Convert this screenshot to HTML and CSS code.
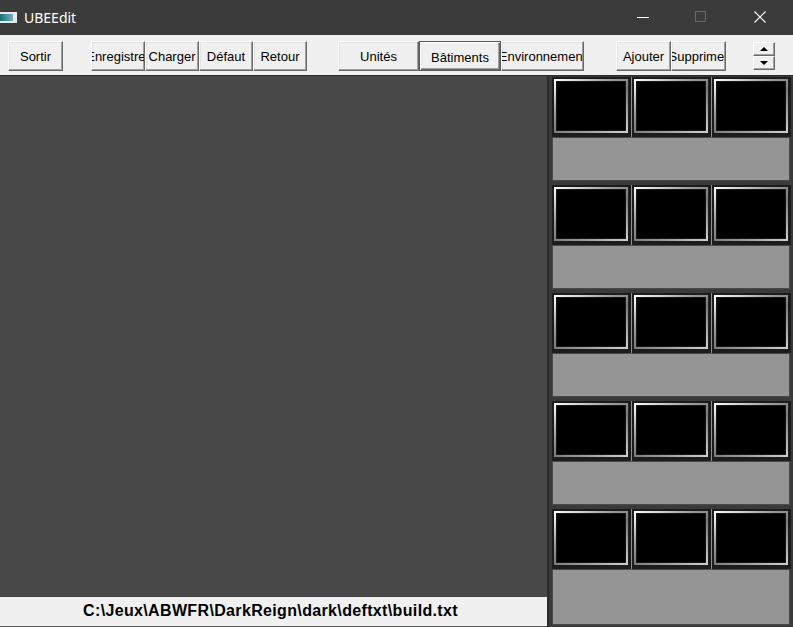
FILE: index.html
```html
<!DOCTYPE html>
<html lang="fr">
<head>
<meta charset="utf-8">
<title>UBEEdit</title>
<link rel="stylesheet" href="styles.css">
</head>
<body>
<div class="window">
  <header class="titlebar">
    <span class="app-icon"><span class="app-icon-inner"></span></span>
    <span class="title">UBEEdit</span>
    <div class="caption-buttons">
      <span class="cap cap-min"><svg width="12" height="12" viewBox="0 0 12 12"><line x1="0" y1="6.5" x2="12" y2="6.5" stroke="#ffffff" stroke-width="1"/></svg></span>
      <span class="cap cap-max"><svg width="12" height="12" viewBox="0 0 12 12"><rect x="0.5" y="0.5" width="10" height="10" fill="none" stroke="#6a6a6a" stroke-width="1"/></svg></span>
      <span class="cap cap-close"><svg width="12" height="12" viewBox="0 0 12 12"><path d="M0.5 0.5 L11.5 11.5 M11.5 0.5 L0.5 11.5" stroke="#ffffff" stroke-width="1.1"/></svg></span>
    </div>
  </header>

  <nav class="toolbar">
    <button class="btn w55">Sortir</button>
    <div class="group g-file">
      <button class="btn w54">Enregistrer</button>
      <button class="btn w54">Charger</button>
      <button class="btn w54">Défaut</button>
      <button class="btn w54">Retour</button>
    </div>
    <div class="group g-kind">
      <button class="btn w81">Unités</button>
      <button class="btn w82 active">Bâtiments</button>
      <button class="btn w83">Environnement</button>
    </div>
    <div class="group g-edit">
      <button class="btn w55">Ajouter</button>
      <button class="btn w55">Supprimer</button>
    </div>
    <div class="spin">
      <span class="spin-half"><span class="tri-up"></span></span>
      <span class="spin-half"><span class="tri-down"></span></span>
    </div>
  </nav>

  <main class="workspace">
    <section class="editor">
      <div class="canvas"></div>
      <div class="statusbar">C:\Jeux\ABWFR\DarkReign\dark\deftxt\build.txt</div>
    </section>

    <aside class="palette">
      <div class="block">
        <div class="tiles">
          <div class="tile"><div class="frame"><div class="screen"></div></div></div>
          <div class="tile"><div class="frame"><div class="screen"></div></div></div>
          <div class="tile"><div class="frame"><div class="screen"></div></div></div>
        </div>
        <div class="info"></div>
      </div>
      <div class="block">
        <div class="tiles">
          <div class="tile"><div class="frame"><div class="screen"></div></div></div>
          <div class="tile"><div class="frame"><div class="screen"></div></div></div>
          <div class="tile"><div class="frame"><div class="screen"></div></div></div>
        </div>
        <div class="info"></div>
      </div>
      <div class="block">
        <div class="tiles">
          <div class="tile"><div class="frame"><div class="screen"></div></div></div>
          <div class="tile"><div class="frame"><div class="screen"></div></div></div>
          <div class="tile"><div class="frame"><div class="screen"></div></div></div>
        </div>
        <div class="info"></div>
      </div>
      <div class="block">
        <div class="tiles">
          <div class="tile"><div class="frame"><div class="screen"></div></div></div>
          <div class="tile"><div class="frame"><div class="screen"></div></div></div>
          <div class="tile"><div class="frame"><div class="screen"></div></div></div>
        </div>
        <div class="info"></div>
      </div>
      <div class="block last">
        <div class="tiles">
          <div class="tile"><div class="frame"><div class="screen"></div></div></div>
          <div class="tile"><div class="frame"><div class="screen"></div></div></div>
          <div class="tile"><div class="frame"><div class="screen"></div></div></div>
        </div>
        <div class="info"></div>
      </div>
    </aside>
  </main>
</div>
</body>
</html>
```

FILE: styles.css
```css
* { box-sizing: border-box; }

html, body {
  margin: 0;
  padding: 0;
  width: 793px;
  height: 627px;
  overflow: hidden;
  background: #3a3a3a;
}

.window {
  width: 793px;
  height: 627px;
  display: flex;
  flex-direction: column;
}

/* ---- title bar ---- */
.titlebar {
  height: 35px;
  flex: none;
  background: #3b3b3b;
  display: flex;
  align-items: center;
  padding-bottom: 1px;
}

.app-icon {
  width: 17px;
  height: 11px;
  border: 1px solid #e8e8e8;
  border-left: none;
  background: #e8e8e8;
  display: flex;
  padding: 1px 3px 1px 0;
}

.app-icon-inner {
  flex: 1;
  background: linear-gradient(90deg, #1e6f6a 0%, #3f8fa0 45%, #7ea8c0 100%);
}

.title {
  margin-left: 7px;
  color: #ffffff;
  font-family: "Noto Sans", "Open Sans", sans-serif;
  font-size: 14px;
}

.caption-buttons {
  margin-left: auto;
  display: flex;
  height: 35px;
}

.cap {
  height: 35px;
  display: flex;
  align-items: center;
  justify-content: center;
}

.cap-min { width: 46px; margin-right: 3px; }
.cap-max { width: 63px; }
.cap-close { width: 56px; margin-right: 5px; }

/* ---- toolbar ---- */
.toolbar {
  height: 41px;
  flex: none;
  background: #f0f0f0;
  border-bottom: 1px solid #2a2a2a;
  display: flex;
  align-items: flex-start;
  padding: 6px 0 0 8px;
}

.group { display: flex; }
.g-file { margin-left: 28px; }
.g-kind { margin-left: 31px; }
.g-edit { margin-left: 32px; }

/* captions are centred and clipped on both sides when too long */
.btn {
  height: 30px;
  padding: 0;
  margin: 0;
  background: #f0f0f0;
  border: 1px solid;
  border-color: #ffffff #696969 #696969 #ffffff;
  box-shadow: inset -1px -1px 0 #a0a0a0, inset 1px 1px 0 #e3e3e3;
  font-family: "Liberation Sans", Arial, sans-serif;
  font-size: 13px;
  color: #000000;
  white-space: nowrap;
  overflow: hidden;
  display: flex;
  align-items: center;
  justify-content: center;
}

.w54 { width: 54px; }
.w55 { width: 55px; }
.w81 { width: 81px; }
.w82 { width: 82px; }
.w83 { width: 83px; }

.btn.active {
  border: 1px solid #5a5a5a;
  box-shadow: inset 1px 1px 0 #ffffff, inset -1px -1px 0 #696969, inset -2px -2px 0 #a0a0a0;
  padding-top: 2px;
}

.spin {
  margin-left: 27px;
  margin-top: 1px;
  width: 22px;
  height: 28px;
  display: flex;
  flex-direction: column;
}

.spin-half {
  flex: 1;
  background: #f0f0f0;
  border: 1px solid;
  border-color: #ffffff #696969 #696969 #ffffff;
  box-shadow: inset -1px -1px 0 #a0a0a0;
  display: flex;
  align-items: center;
  justify-content: center;
}

.tri-up, .tri-down {
  width: 0;
  height: 0;
  border-left: 4px solid transparent;
  border-right: 4px solid transparent;
}
.tri-up { border-bottom: 4px solid #000; }
.tri-down { border-top: 4px solid #000; }

/* ---- workspace ---- */
.workspace {
  flex: 1;
  display: flex;
  min-height: 0;
}

.editor {
  width: 547px;
  display: flex;
  flex-direction: column;
}

.canvas {
  flex: 1;
  background: #474747;
}

.statusbar {
  height: 30px;
  background: #f0f0f0;
  border-bottom: 1px solid #5a5a5a;
  font-family: "Liberation Sans", Arial, sans-serif;
  font-weight: bold;
  font-size: 16px;
  letter-spacing: 0.35px;
  color: #000;
  display: flex;
  align-items: center;
  justify-content: center;
  padding: 0 6px 2px 0;
}

/* ---- building palette ---- */
.palette {
  width: 246px;
  background: #3a3a3a;
  border-left: 2px solid #2b2b2b;
  padding: 1px 3px 0 3px;
  display: flex;
  flex-direction: column;
  gap: 4px;
}

.block {
  display: flex;
  flex-direction: column;
  flex: none;
}

.block.last { flex: 1; }

.tiles {
  height: 60px;
  display: grid;
  grid-template-columns: 79px 79px 79px;
  gap: 1px;
  background: #8e8e8e;
}

.tile {
  background: #1c1c1c;
  padding: 2px 3px 4px 2px;
}

/* brushed-metal frame round each slot */
.frame {
  height: 100%;
  border: 2px solid transparent;
  border-image: linear-gradient(150deg, #f2ffff 0%, #dcdcdc 12%, #9a9a9a 35%, #7c7c7c 55%, #a8a8a8 80%, #cfcfcf 100%) 1;
  background: #000;
}

.screen {
  height: 100%;
  background: #000000;
  border: 1px solid #181818;
}

.info {
  height: 44px;
  background: #949494;
  border: 1px solid #4a4a4a;
}

.block.last .info {
  flex: 1;
  height: auto;
  margin-bottom: 2px;
}
```
